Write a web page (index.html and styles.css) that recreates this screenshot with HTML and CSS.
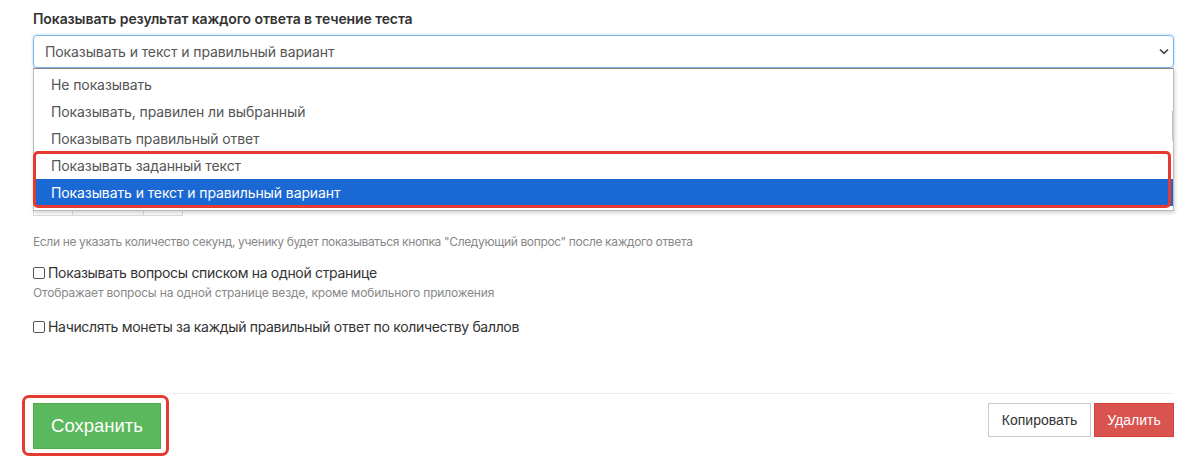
FILE: index.html
```html
<!DOCTYPE html>
<html lang="ru">
<head>
<meta charset="utf-8">
<title>Настройки теста</title>
<link rel="stylesheet" href="styles.css">
</head>
<body>
<div class="page">
  <div class="field">
    <label class="field-label">Показывать результат каждого ответа в течение теста</label>
    <div class="select-wrap">
      <div class="select">
        <span>Показывать и текст и правильный вариант</span>
        <svg class="chev" width="10" height="7" viewBox="0 0 10 7"><path d="M1 1.5 L5 5.3 L9 1.5" fill="none" stroke="#444" stroke-width="1.7"/></svg>
      </div>
      <ul class="dropdown">
        <li>Не показывать</li>
        <li>Показывать, правилен ли выбранный</li>
        <li>Показывать правильный ответ</li>
        <li>Показывать заданный текст</li>
        <li class="selected">Показывать и текст и правильный вариант</li>
        <div class="scroll-thumb"></div>
        <div class="highlight"></div>
      </ul>
    </div>
  </div>

  <div class="input-group">
    <span class="ig-add"></span>
    <span class="ig-input"></span>
    <span class="ig-add"></span>
  </div>

  <p class="help help-first">Если не указать количество секунд, ученику будет показываться кнопка "Следующий вопрос" после каждого ответа</p>

  <label class="check check-1"><input type="checkbox"><span>Показывать вопросы списком на одной странице</span></label>
  <p class="help help-sub">Отображает вопросы на одной странице везде, кроме мобильного приложения</p>

  <label class="check check-2"><input type="checkbox"><span>Начислять монеты за каждый правильный ответ по количеству баллов</span></label>

  <div class="footer">
    <div class="save-outline"><button class="btn btn-save">Сохранить</button></div>
    <div class="right-btns">
      <button class="btn btn-default">Копировать</button>
      <button class="btn btn-danger">Удалить</button>
    </div>
  </div>
</div>
</body>
</html>
```
FILE: styles.css
```css
* { box-sizing: border-box; }
html, body { margin: 0; padding: 0; background: #fff; }
body {
  font-family: Inter, "Noto Sans", sans-serif;
  color: #333;
  width: 1200px;
  height: 457px;
  overflow: hidden;
}
.page {
  padding: 9px 26px 0 33px;
}
.field-label {
  display: block;
  font-size: 14px;
  font-weight: 600;
  line-height: 20px;
  color: #333;
  letter-spacing: -0.1px;
}
.select-wrap {
  position: relative;
  margin-top: 6px;
}
.select {
  height: 33px;
  border: 1px solid #7fb6ea;
  border-radius: 4px;
  box-shadow: 0 0 3px rgba(102, 175, 233, 0.6);
  display: flex;
  align-items: center;
  justify-content: space-between;
  padding: 0 4px 0 11px;
  font-size: 14px;
  color: #555;
  letter-spacing: -0.1px;
}
.chev { display: block; }
.dropdown {
  position: absolute;
  top: 33px;
  left: 0;
  right: 0;
  margin: 0;
  padding: 2px 0 4px;
  list-style: none;
  background: #fff;
  border: 1px solid #bbb;
  border-top-color: #888;
  box-shadow: 1px 2px 4px rgba(0, 0, 0, 0.18);
  z-index: 5;
}
.dropdown li {
  height: 27px;
  line-height: 27px;
  padding-left: 17px;
  font-size: 14px;
  color: #555;
  letter-spacing: -0.1px;
}
.dropdown li.selected {
  background: #1a68d3;
  color: #fff;
}
.scroll-thumb {
  position: absolute;
  right: -1px;
  top: 42px;
  width: 2px;
  height: 30px;
  background: #c8c8c8;
}
.highlight {
  position: absolute;
  left: -1px;
  right: 2px;
  top: 82px;
  height: 57px;
  border: 3px solid #e53a32;
  border-radius: 5px;
  pointer-events: none;
}
.input-group {
  display: flex;
  width: 150px;
  height: 34px;
  margin-top: 114px;
  border: 1px solid #ddd;
}
.ig-add { width: 39px; }
.ig-add + .ig-input { border-left: 1px solid #ddd; border-right: 1px solid #ddd; width: 72px; }
.help {
  margin: 0;
  font-size: 12px;
  color: #888;
  line-height: 16px;
  letter-spacing: -0.35px;
}
.help-first { margin-top: 18px; }
.check {
  display: flex;
  align-items: center;
  font-size: 14px;
  line-height: 20px;
  color: #333;
  letter-spacing: -0.32px;
}
.check input {
  appearance: none;
  -webkit-appearance: none;
  width: 12px;
  height: 12px;
  margin: 0 3px 0 0;
  border: 1px solid #555;
  border-radius: 2px;
  background: #fff;
}
.check-1 { margin-top: 13px; }
.help-sub { margin-top: 2px; letter-spacing: -0.18px; }
.check-2 { margin-top: 16px; }
.footer {
  margin-top: 56px;
  border-top: 1px solid #eee;
  padding-top: 7px;
  display: flex;
  justify-content: space-between;
  align-items: flex-start;
}
.save-outline {
  margin-left: -11px;
  margin-top: -6px;
  padding: 5px 5px 4px 8px;
  border: 3px solid #e53a32;
  border-radius: 7px;
}
.btn {
  font-family: "Liberation Sans", Arial, sans-serif;
  border: 1px solid transparent;
  cursor: pointer;
  display: block;
}
.btn-save {
  width: 128px;
  height: 46px;
  background: #5cb85c;
  border-color: #4cae4c;
  color: #fff;
  font-size: 18.5px;
  border-radius: 0;
}
.right-btns { display: flex; gap: 3px; margin-top: 2px; }
.btn-default {
  width: 103px;
  height: 34px;
  background: #fff;
  border-color: #ccc;
  color: #333;
  font-size: 14px;
}
.btn-danger {
  width: 80px;
  height: 34px;
  background: #d9534f;
  border-color: #d43f3a;
  color: #fff;
  font-size: 14px;
}
```
